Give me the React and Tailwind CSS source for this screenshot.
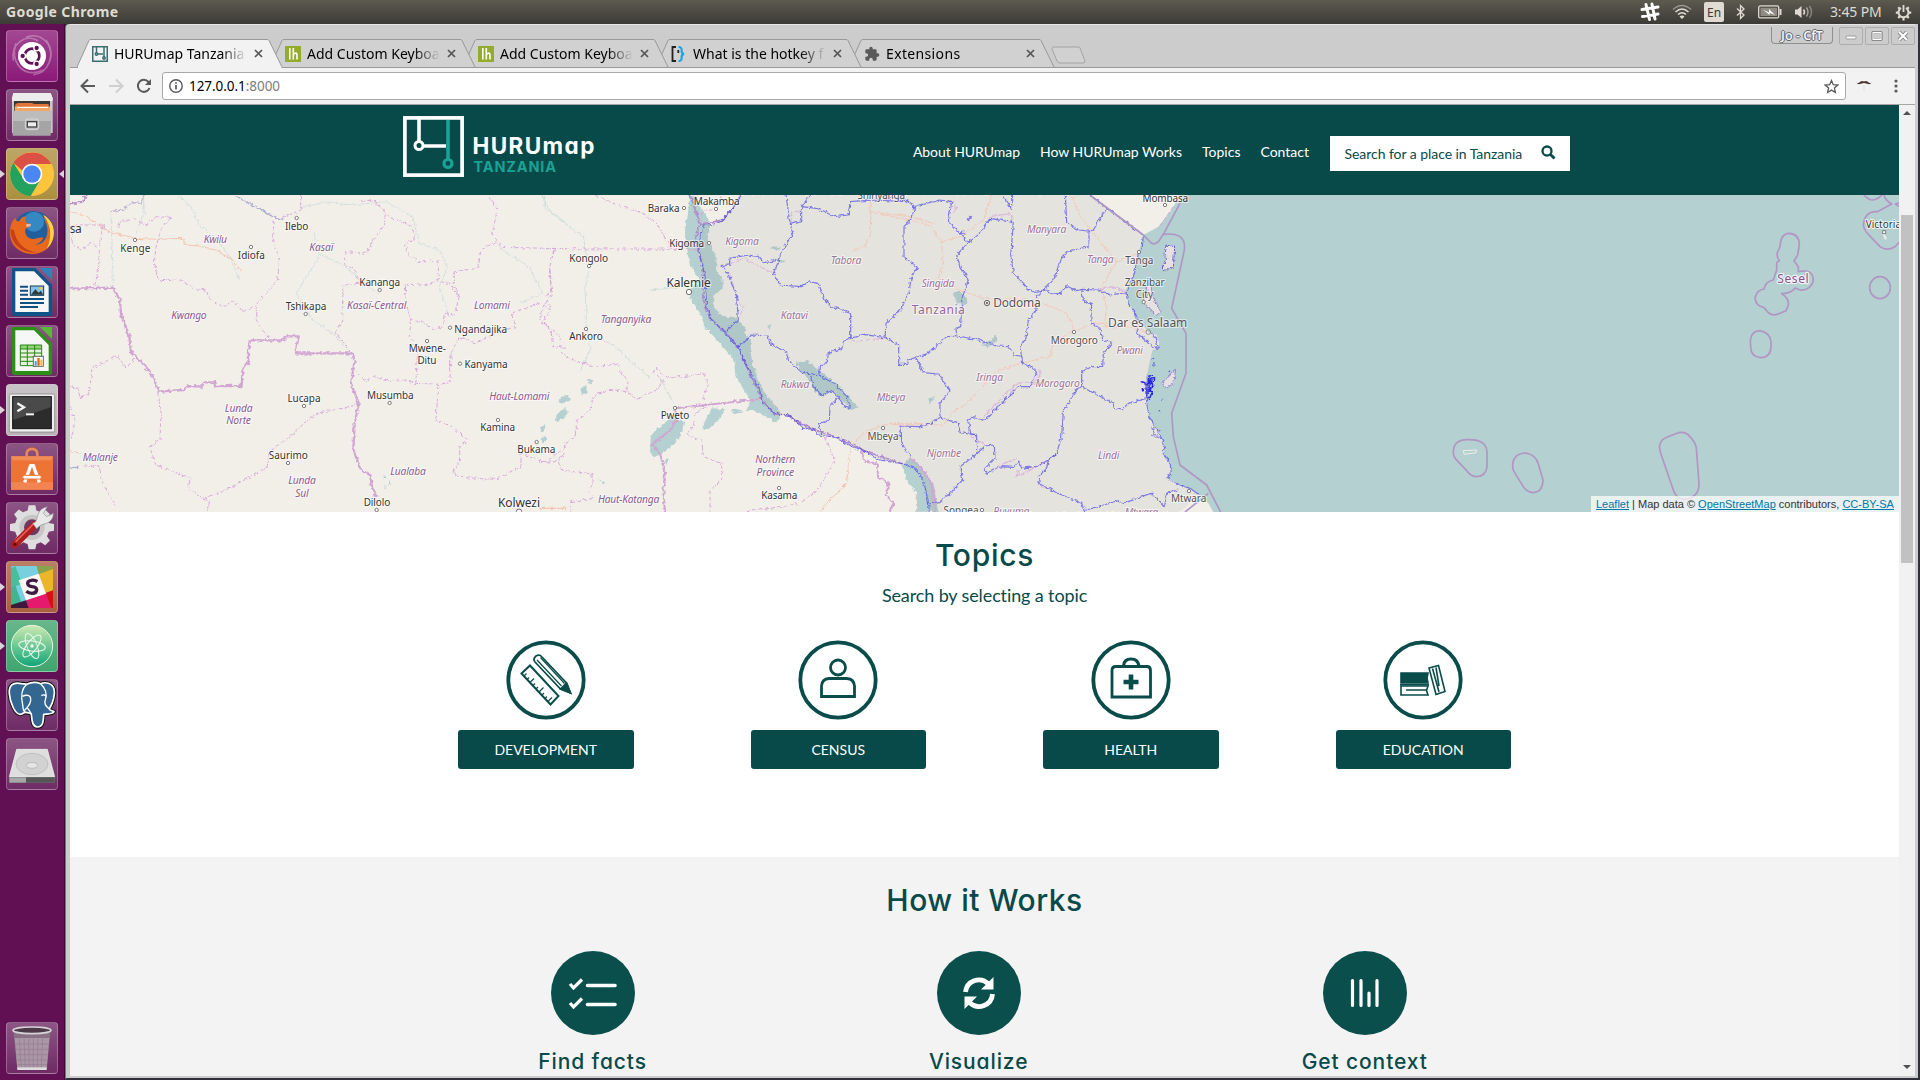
import React from "react";

const TEAL = "#094c4a";

/* ---------- launcher artwork (each in a 156 x 156 box) ---------- */

const Ubuntu = () => (
  <g>
    <g fill="none" stroke="#fff" opacity="0.3" strokeWidth="5">
      <path d="M22 92C14 40 60 10 96 32" />
      <path d="M120 30C150 70 130 130 82 134" />
      <path d="M30 40C10 90 50 150 110 120" />
      <path d="M60 22C100 4 146 40 132 92" />
    </g>
    <circle cx="78" cy="78" r="42" fill="#fff" />
    <circle cx="78" cy="78" r="22" fill="none" stroke="#5f1355" strokeWidth="8" />
    {[[50, 78], [92, 54], [92, 102]].map(([x, y]) => (
      <circle key={x + "-" + y} cx={x} cy={y} r="8.5" fill="#5f1355" stroke="#fff" strokeWidth="4" />
    ))}
  </g>
);

const Files = () => (
  <g>
    <path d="M18 28L22 12H134L140 28V132H18Z" fill="#c9c9c9" />
    <path d="M18 28L22 12H134L140 28V36H18Z" fill="#ececec" />
    <rect x="24" y="36" width="108" height="34" fill="#3b3936" />
    <path d="M28 46L36 42H78L84 45H128V66H28Z" fill="#e0743a" />
    <rect x="26" y="52" width="106" height="16" fill="#f0a765" />
    <rect x="34" y="54" width="92" height="3" fill="#fff" />
    <path d="M22 66H136L134 140H20Z" fill="#a5a5a5" />
    <path d="M22 66H136L135 96H21Z" fill="#bcbcbc" />
    <rect x="58" y="90" width="40" height="32" rx="8" fill="#bdbdbd" stroke="#d8d8d8" strokeWidth="3" />
    <rect x="64" y="98" width="28" height="16" fill="#eee" stroke="#444" strokeWidth="4" />
  </g>
);

const Chrome = () => (
  <g>
    <circle cx="78" cy="78" r="66" fill="#fdc43c" />
    <path d="M22 44A66 66 0 0 1 136 48H78A30 30 0 0 0 50 68Z" fill="#db5146" />
    <path d="M22 44A66 66 0 0 0 74 144L104 94A30 30 0 0 1 52 92Z" fill="#22a15f" />
    <circle cx="78" cy="78" r="31" fill="#fff" />
    <circle cx="78" cy="78" r="26" fill="#4a87f2" />
  </g>
);

const Firefox = () => (
  <g>
    <circle cx="82" cy="72" r="60" fill="#1f5f9e" />
    <circle cx="84" cy="44" r="30" fill="#3f9bd2" opacity="0.7" />
    <path d="M112 24C150 44 154 96 122 126C90 152 40 142 20 110C4 82 12 46 28 32C30 42 34 44 40 42C44 34 52 28 60 28C56 38 58 44 64 48L72 52C74 58 66 62 60 64C54 72 58 92 78 96C94 96 98 90 112 92C108 104 96 112 84 112C110 116 128 92 124 62C122 50 116 40 112 24Z" fill="#e8681d" />
    <path d="M112 24C150 44 154 96 122 126C136 98 140 60 112 24Z" fill="#ffd34a" />
    <path d="M14 66C12 110 50 142 94 136C60 134 30 110 24 70Z" fill="#c63f17" />
    <path d="M60 52L74 50L74 58L62 60Z" fill="#f3b7a0" />
  </g>
);

const Sheet = ({ edge, corner, children }) => (
  <g>
    <path d="M22 6H88L138 56V142Q138 150 130 150H26Q18 150 18 142V10Q18 6 22 6Z" fill={edge} />
    <path d="M28 16H84L128 60V138H28Z" fill="#f7f7f7" />
    <path d="M102 6H138V42Z" fill={corner} />
    {children}
  </g>
);

const Writer = () => (
  <Sheet edge="#0e5488" corner="#2e83bd">
    <g stroke="#12507f" strokeWidth="6">
      <path d="M42 62H66M42 74H66M42 86H66M42 99H114M42 111H114M42 123H96" />
    </g>
    <rect x="73" y="60" width="40" height="28" fill="#83c3ea" stroke="#163c5c" strokeWidth="3" />
    <path d="M75 86L88 70L98 80L104 74L112 86Z" fill="#2c3d38" />
    <circle cx="105" cy="67" r="4" fill="#fbcb3d" />
  </Sheet>
);

const Calc = () => (
  <Sheet edge="#2a9115" corner="#55bb35">
    <rect x="43" y="60" width="64" height="62" fill="#e4f4dd" />
    <rect x="43" y="60" width="64" height="12" fill="#8fd673" />
    <path d="M43 60H107V122H43ZM43 72H107M43 84H107M43 96H107M43 109H107M64 60V122M86 60V122" stroke="#2a8317" strokeWidth="3" fill="none" />
    <rect x="82" y="94" width="30" height="30" fill="#fff" stroke="#666" strokeWidth="3" />
    <rect x="86" y="108" width="6" height="14" fill="#3ea0dc" />
    <rect x="94" y="99" width="7" height="23" fill="#e8641c" />
    <rect x="103" y="104" width="6" height="18" fill="#f3ba2f" />
  </Sheet>
);

const Terminal = () => (
  <g>
    <rect x="10" y="30" width="136" height="114" rx="4" fill="#efefef" stroke="#777" strokeWidth="2" />
    <rect x="20" y="38" width="116" height="96" fill="#2c2c2c" stroke="#111" strokeWidth="3" />
    <path d="M22 40H134V70L22 108Z" fill="#4a4a4a" />
    <path d="M34 58L54 70L34 82" fill="none" stroke="#f3f3f3" strokeWidth="7" />
    <path d="M60 91H84" stroke="#f3f3f3" strokeWidth="6" />
  </g>
);

const Software = () => (
  <g>
    <path d="M62 50V32Q62 17 78 17Q94 17 94 32V50" fill="none" stroke="#c05e39" strokeWidth="9" />
    <path d="M15 40H141V140H15Z" fill="#ed7434" />
    <path d="M15 40H141L136 52H20Z" fill="#f28d56" />
    <path d="M62 52V34Q62 18 78 18Q94 18 94 34V52" fill="none" stroke="#e58a62" strokeWidth="7" />
    <path d="M15 118H141V140H15Z" fill="#f28452" />
    <path d="M56 118L74 68H82L100 118" fill="none" stroke="#fff" strokeWidth="10" />
    <rect x="50" y="97" width="56" height="11" rx="5" fill="#fff" stroke="#ed7434" strokeWidth="3" />
  </g>
);

const Settings = () => (
  <g>
    <g fill="#dedede">
      <circle cx="78" cy="76" r="52" />
      {[0, 45, 90, 135, 180, 225, 270, 315].map((a) => (
        <path key={a} d="M64 30L68 10H88L92 30Z" transform={`rotate(${a} 78 76)`} />
      ))}
    </g>
    <circle cx="78" cy="76" r="38" fill="#c6c6c6" />
    <circle cx="78" cy="76" r="24" fill="#6d3a64" />
    <path d="M26 128L86 68" stroke="#b01f1f" strokeWidth="22" strokeLinecap="round" />
    <path d="M30 118L84 64" stroke="#e4615c" strokeWidth="5" strokeLinecap="round" />
    <path d="M80 64C94 60 90 52 96 38Q102 18 124 14L112 34L122 44L142 34Q142 56 122 64Q104 66 92 80Z" fill="#e9e9e9" stroke="#8f8f8f" strokeWidth="2" />
    <circle cx="27" cy="127" r="5" fill="#5f0f12" />
  </g>
);

const SlackTile = () => (
  <g>
    <rect x="15" y="15" width="126" height="126" rx="6" fill="#78d0df" />
    <path d="M15 36L52 141H15Z" fill="#3fb595" />
    <path d="M15 22L28 15L48 68L15 80Z" fill="#45bf9c" />
    <path d="M92 15H141V30L98 40Z" fill="#8aa24c" />
    <path d="M98 40L141 24V88L116 96Z" fill="#ebb62a" />
    <path d="M118 96L141 88V141H134Z" fill="#d90f16" />
    <path d="M60 118L120 96L134 141H66Z" fill="#e5196e" />
    <path d="M15 132L60 118L68 141H15Z" fill="#3b1a3e" />
    <path d="M38 58L98 38L120 98L60 118Z" fill="#fbf7f3" />
    <path d="M94 62Q86 56 76 58Q64 60 65 68Q66 76 78 77Q92 78 92 87Q91 97 78 97Q68 97 61 91" fill="none" stroke="#3e1c43" strokeWidth="10" />
  </g>
);

const Atom = () => (
  <g>
    <circle cx="78" cy="78" r="62" fill="url(#atomFill)" stroke="#e6f5e0" strokeWidth="3" />
    <g fill="none" stroke="#eafaf0" strokeWidth="3">
      <ellipse cx="78" cy="78" rx="40" ry="15" transform="rotate(8 78 78)" />
      <ellipse cx="78" cy="78" rx="40" ry="15" transform="rotate(68 78 78)" />
      <ellipse cx="78" cy="78" rx="40" ry="15" transform="rotate(128 78 78)" />
    </g>
    <circle cx="78" cy="78" r="5" fill="#fff" />
  </g>
);

const ELEPHANT = "M46 14C20 8 8 20 10 44C12 72 28 106 42 106C50 106 52 100 58 100C68 104 74 98 76 106C78 124 78 142 94 144C112 144 112 126 113 106C122 104 138 108 144 98C140 94 132 96 130 90C142 70 148 44 144 30C138 12 118 8 104 14C90 8 74 10 62 16C56 14 52 14 46 14Z";

const Postgres = () => (
  <g strokeLinejoin="round">
    <path d={ELEPHANT} fill="#336791" stroke="#111" strokeWidth="11" />
    <path d={ELEPHANT} fill="#336791" stroke="#fff" strokeWidth="5" />
    <path d="M62 16C46 30 44 52 50 78C52 88 50 96 58 100M104 14C118 28 124 46 118 62C112 76 122 84 130 90M50 52C60 46 74 48 74 60C76 76 60 88 56 94M106 50C112 46 118 48 120 52M76 106C70 92 64 88 62 84" fill="none" stroke="#fff" strokeWidth="4" />
  </g>
);

const Drive = () => (
  <g>
    <path d="M32 34H124L146 118V134H10V118Z" fill="#8b8b8b" />
    <path d="M32 34H124L146 116H10Z" fill="#dedede" stroke="#f4f4f4" strokeWidth="2" />
    <ellipse cx="78" cy="78" rx="48" ry="32" fill="#d2d2d2" stroke="#b5b5b5" strokeWidth="2" />
    <ellipse cx="78" cy="82" rx="17" ry="9" fill="#e5e5e5" stroke="#aaa" strokeWidth="2" />
    <path d="M10 118H146V134H10Z" fill="#565656" />
    <path d="M10 118H60V134H10Z" fill="#a7a7a7" />
  </g>
);

const Trash = () => (
  <g>
    <path d="M22 24H134L122 142H34Z" fill="#8a7286" />
    <path d="M26 48H130L122 142H34Z" fill="#b3a3b0" opacity="0.75" />
    <g stroke="#6c4a67" strokeWidth="2" opacity="0.35">
      <path d="M40 50L46 140M54 50L58 140M68 50L70 140M82 50V140M96 50L94 140M110 50L106 140M28 66H128M29 82H127M31 98H125M33 114H123M34 128H122" />
    </g>
    <ellipse cx="78" cy="25" rx="57" ry="10" fill="#4c3a49" stroke="#d8d3d7" strokeWidth="5" />
    <path d="M34 136H122V144H34Z" fill="#ddd" />
  </g>
);

const launcher = [
  { id: "ubuntu", Art: Ubuntu, bg: "bg-[#8b1a78]" },
  { id: "files", Art: Files, bg: "bg-[#6f2b65]" },
  { id: "chrome", Art: Chrome, bg: "bg-[#ac9040]", run: true, focus: true },
  { id: "firefox", Art: Firefox, bg: "bg-[#6f2b65]" },
  { id: "writer", Art: Writer, bg: "bg-[#6f2b65]" },
  { id: "calc", Art: Calc, bg: "bg-[#6f2b65]" },
  { id: "terminal", Art: Terminal, bg: "bg-[#b9b4b8]", run: true },
  { id: "software", Art: Software, bg: "bg-[#6f2b65]" },
  { id: "settings", Art: Settings, bg: "bg-[#6f2b65]" },
  { id: "slack", Art: SlackTile, bg: "bg-[#a95f40]", run: true },
  { id: "atom", Art: Atom, bg: "bg-[#41a56e]", run: true },
  { id: "postgres", Art: Postgres, bg: "bg-[#6f2b65]" },
  { id: "drive", Art: Drive, bg: "bg-[#6f2b65]" },
];

function Tile({ Art, bg, run, focus }) {
  return (
    <div className="relative flex justify-center w-[64px]">
      {run && <span className="absolute left-0 top-[22px] border-y-[4px] border-y-transparent border-l-[5px] border-l-[#d9d4d8]" />}
      <div className={`w-[52px] h-[52px] rounded-[4px] border border-white/25 bg-linear-to-b from-white/20 to-transparent ${bg}`}>
        <svg viewBox="0 0 156 156" className="block w-[52px] h-[52px] -m-px">
          <defs>
            <linearGradient id="atomFill" x1="0" y1="0" x2="0" y2="1">
              <stop offset="0" stopColor="#cdeab0" />
              <stop offset="1" stopColor="#0fa678" />
            </linearGradient>
          </defs>
          <Art />
        </svg>
      </div>
      {focus && <span className="absolute right-0 top-[22px] border-y-[4px] border-y-transparent border-r-[5px] border-r-[#d9d4d8]" />}
    </div>
  );
}

/* ---------- desktop bar ---------- */

function TopBar() {
  return (
    <div className="h-6 shrink-0 flex items-center justify-between bg-linear-to-b from-[#5d5a4f] to-[#3c3b37] text-[#dfdbd2] font-['Noto_Sans',sans-serif]">
      <div className="pl-[6px] text-[14px] leading-[24px] font-bold tracking-[0.38px]">Google Chrome</div>
      <div className="flex items-center pr-[8px] text-[14px] leading-[24px]">
        <svg width="20" height="20" viewBox="0 0 20 20" fill="none" stroke="#fff" strokeWidth="3" strokeLinecap="round">
          <path d="M6 2.500L9.500 17.500M12 2L15 17M2 7.500L18 5M2.500 14.500L18 12" />
        </svg>
        <svg width="20" height="16" viewBox="0 0 20 16" className="ml-[12px]" fill="none" stroke="#dfdbd2" strokeWidth="1.6">
          <path d="M1 5.5Q10 -2.5 19 5.5" opacity="0.5" />
          <path d="M3.5 8Q10 2 16.5 8" />
          <path d="M6 10.5Q10 7 14 10.5" />
          <path d="M7.5 12.5Q10 10.5 12.5 12.5L10 15Z" fill="#dfdbd2" stroke="none" />
        </svg>
        <span className="ml-[12px] w-[20px] h-[20px] rounded-[2px] bg-[#dfdbd2] text-[#3c3b37] text-[12px] leading-[21px] text-center">En</span>
        <svg width="9" height="16" viewBox="0 0 9 16" className="ml-[12px]" fill="none" stroke="#dfdbd2" strokeWidth="1.3">
          <path d="M1 4.5L8 11L4.5 14.5V1.5L8 5L1 11.5" />
        </svg>
        <svg width="24" height="14" viewBox="0 0 24 14" className="ml-[13px]">
          <rect x="0.7" y="0.9" width="20" height="12" rx="1.5" fill="none" stroke="#dfdbd2" strokeWidth="1.3" />
          <rect x="21.5" y="4" width="2" height="6" fill="#dfdbd2" />
          <rect x="2.5" y="2.8" width="16.5" height="8.2" fill="#8f8b82" />
          <path d="M5 4.5L11 7.5L11 4L17 10L11.5 7.8V10Z" fill="#fff" />
        </svg>
        <svg width="20" height="16" viewBox="0 0 20 16" className="ml-[12px]" fill="none" stroke="#dfdbd2" strokeWidth="1.5">
          <path d="M1 5.5H3.5L7.5 2V14L3.5 10.5H1Z" fill="#dfdbd2" stroke="none" />
          <path d="M9.5 5.5Q11.5 8 9.5 10.5" />
          <path d="M12.5 3.5Q15.5 8 12.5 12.5" opacity="0.6" />
          <path d="M15.5 2Q19.5 8 15.5 14" opacity="0.4" />
        </svg>
        <span className="ml-[16px] w-[53px] text-[14px] tracking-[-0.15px] whitespace-nowrap">3:45 PM</span>
        <svg width="17" height="17" viewBox="0 0 17 17" className="ml-[12px]" fill="none" stroke="#dfdbd2">
          <path d="M6 4A5 5 0 1 0 11 4" strokeWidth="2" />
          <path d="M8.5 1V8" strokeWidth="1.8" />
          <path d="M3.2 3.2L4.8 4.8M13.8 3.2L12.2 4.8M0.8 8.7H3M14 8.7H16.2M3.2 14L4.8 12.4M13.8 14L12.2 12.4M8.5 14V16.4" strokeWidth="2.2" />
        </svg>
      </div>
    </div>
  );
}

/* ---------- browser chrome ---------- */

const HuruFav = () => (
  <svg width="16" height="16" viewBox="0 0 16 16" fill="none" stroke="#3b6f6e" strokeWidth="1.5">
    <rect x="0.75" y="0.75" width="14.5" height="14.5" />
    <path d="M4.5 1V7M5 8H11M12 1V11" />
    <circle cx="4.5" cy="8" r="1.2" />
    <circle cx="12" cy="12" r="1.2" />
  </svg>
);
const LhFav = () => (
  <svg width="16" height="16" viewBox="0 0 16 16">
    <rect width="16" height="16" fill="#93ac2c" />
    <path d="M4.8 2V13.5M8.3 2V13.5M8.3 8.5Q12 5.5 12 9V13.5" fill="none" stroke="#fff" strokeWidth="1.6" />
  </svg>
);
const CodeFav = () => (
  <svg width="16" height="16" viewBox="0 0 16 16" fill="none" strokeWidth="1.8">
    <path d="M5 1H1.5V15H5" stroke="#222" />
    <path d="M7.3 4V7" stroke="#222" />
    <path d="M7.5 1Q11 1 10.6 4.5Q10.4 7.5 13 8Q10.4 8.5 10.6 11.5Q11 15 7.5 15" stroke="#18a3e8" strokeWidth="2.1" />
  </svg>
);
const PuzzleFav = () => (
  <svg width="16" height="16" viewBox="0 0 24 24" fill="#5a5a5a">
    <path d="M20.5 11H19V7a2 2 0 0 0-2-2h-4V3.5a2.5 2.5 0 0 0-5 0V5H4a2 2 0 0 0-2 2v3.8h1.5a2.7 2.7 0 0 1 0 5.4H2V20a2 2 0 0 0 2 2h3.8v-1.5a2.7 2.7 0 0 1 5.4 0V22H17a2 2 0 0 0 2-2v-4h1.500a2.500 2.500 0 0 0 0-5z" />
  </svg>
);

const tabs = [
  { label: "HURUmap Tanzania", Fav: HuruFav, z: "z-50", active: true },
  { label: "Add Custom Keyboa", Fav: LhFav, z: "z-40" },
  { label: "Add Custom Keyboa", Fav: LhFav, z: "z-30" },
  { label: "What is the hotkey f", Fav: CodeFav, z: "z-20" },
  { label: "Extensions", Fav: PuzzleFav, z: "z-10", wide: true },
];

function Tab({ label, Fav, z, active, wide }) {
  return (
    <div className={`relative w-[193px] h-[28px] shrink-0 ${z}`}>
      <svg width="206" height="29" viewBox="0 0 206 29" className="absolute left-0 top-0">
        <path
          d="M0 28L12 1.5Q12.500 0.500 14 0.500H190Q191.500 0.500 192 1.500L205 28"
          fill={active ? "#f2f2f2" : "#d1d1d1"} stroke="#999" strokeWidth="1"
        />
        {active && <path d="M1 28.500H204.500" stroke="#f2f2f2" strokeWidth="2" />}
      </svg>
      <div className="relative flex items-center h-[29px] pl-[15px]">
        <Fav />
        <span className={`ml-[6px] w-[134px] overflow-hidden whitespace-nowrap text-[14px] leading-[20px] text-black [mask-image:linear-gradient(to_right,#000_80%,transparent_99%)] ${wide ? "tracking-[0.35px]" : "tracking-normal"}`}>{label}</span>
        <svg width="9" height="9" viewBox="0 0 9 9" className="ml-[6.500px] ml-[6px] shrink-0" stroke="#555" strokeWidth="1.7">
          <path d="M1 1L8 8M8 1L1 8" />
        </svg>
      </div>
    </div>
  );
}

function WindowButton({ children }) {
  return (
    <span className="flex items-center justify-center w-[24px] h-[18px] rounded-[2px] border border-[#adadad]">
      <svg width="12" height="10" viewBox="0 0 12 10" fill="none">{children}</svg>
    </span>
  );
}

function BrowserChrome() {
  return (
    <div className="shrink-0 font-['Noto_Sans',sans-serif]">
      <div className="flex items-end justify-between h-[43px] border-t border-[#e6e6e6]">
        <div className="flex items-end pl-[7px]">
          {tabs.map((t, i) => <Tab key={i} {...t} />)}
          <svg width="36" height="18" viewBox="0 0 36 18" className="ml-[9px] mb-[3px]">
            <path d="M2 1H27Q28.500 1 29 2L34 15Q34 17 32 17H9Q7 17 6 15L1 3Q1 1 2 1Z" fill="#d1d1d1" stroke="#a3a3a3" />
          </svg>
        </div>
        <div className="flex self-start pt-[2px] gap-[2px]">
          <span className="mr-[4px] w-[62px] h-[17px] rounded-b-[4px] border border-t-0 border-[#8f8f8f] text-[12.5px] leading-[17px] text-center font-semibold text-[#f4f4f4] [text-shadow:1px_0_0_#666,-1px_0_0_#666,0_1px_0_#666,0_-1px_0_#666] whitespace-nowrap">Jo - CfT</span>
          <WindowButton><rect x="1" y="5" width="10" height="3" rx="1" fill="#fff" stroke="#999" /></WindowButton>
          <WindowButton><rect x="1.500" y="1" width="9" height="8" rx="1" stroke="#8c8c8c" strokeWidth="2.500" /><rect x="2" y="1.500" width="8" height="7" stroke="#fff" /></WindowButton>
          <WindowButton><path d="M2 1L10 9M10 1L2 9" stroke="#8c8c8c" strokeWidth="4" /><path d="M2 1L10 9M10 1L2 9" stroke="#fff" strokeWidth="2" /></WindowButton>
        </div>
      </div>
      <div className="flex items-center h-[38px] bg-[#f2f2f2] border-t border-t-[#999] border-b border-b-[#a6a6a6]">
        <svg width="16" height="16" viewBox="0 0 16 16" className="ml-[10px]" fill="none" stroke="#5a5a5a" strokeWidth="2">
          <path d="M15 8H2M8 1.500L1.500 8L8 14.500" />
        </svg>
        <svg width="16" height="16" viewBox="0 0 16 16" className="ml-[12px]" fill="none" stroke="#cfcfcf" strokeWidth="2">
          <path d="M1 8H14M8 1.500L14.500 8L8 14.500" />
        </svg>
        <svg width="16" height="16" viewBox="0 0 16 16" className="ml-[12px]" fill="none" stroke="#5a5a5a" strokeWidth="2">
          <path d="M13.500 10A6 6 0 1 1 12.500 4L14 5.500" />
          <path d="M15 1V7H9Z" fill="#5a5a5a" stroke="none" />
        </svg>
        <div className="ml-[10px] w-[1684px] h-[28px] flex items-center rounded-[3px] border border-[#a8a8a8] bg-white">
          <svg width="14" height="14" viewBox="0 0 14 14" className="ml-[6px]" fill="none" stroke="#5a5a5a" strokeWidth="1.400">
            <circle cx="7" cy="7" r="6.200" />
            <path d="M7 6V10.500M7 3.200V4.700" strokeWidth="1.700" />
          </svg>
          <span className="ml-[6px] text-[13.5px] leading-[20px] tracking-[-0.05px] text-black">127.0.0.1<span className="text-[#7d7d7d]">:8000</span></span>
          <svg width="15" height="15" viewBox="0 0 15 15" className="ml-auto mr-[6px]" fill="none" stroke="#5a5a5a" strokeWidth="1.300">
            <path d="M7.500 1.500L9.300 5.700L13.800 6.100L10.400 9L11.400 13.500L7.500 11.100L3.600 13.500L4.600 9L1.200 6.100L5.700 5.700Z" />
          </svg>
        </div>
        <svg width="16" height="12" viewBox="0 0 16 12" className="ml-[10px]">
          <path d="M0.500 2.500Q2 4 4.500 1.500Q6.500 0.500 8 1.500Q9.500 0.500 11.500 1.500Q14 4 15.500 2.500Q14.500 5 11 3.800Q8.500 3 8 3Q7.500 3 5 3.800Q1.500 5 0.500 2.500Z" fill="#4a3732" />
          <path d="M8 5V11" stroke="#ddd" />
        </svg>
        <svg width="4" height="14" viewBox="0 0 4 14" className="ml-[22px]" fill="#5a5a5a">
          <circle cx="2" cy="2" r="1.600" /><circle cx="2" cy="7" r="1.600" /><circle cx="2" cy="12" r="1.600" />
        </svg>
      </div>
    </div>
  );
}

/* ---------- site header ---------- */

function SiteHeader() {
  return (
    <header className="h-[90px] bg-[#084a49] shrink-0">
      <div className="mx-auto w-[1170px] h-full flex justify-between">
        <div className="flex items-start ml-[3px] pt-[11px]">
          <svg width="61" height="61" viewBox="0 0 61 61" fill="none">
            <rect x="1.900" y="1.900" width="57.200" height="57.200" stroke="#fff" strokeWidth="3.700" />
            <path d="M16 3V25M21 30H43" stroke="#fff" strokeWidth="3.600" />
            <circle cx="16" cy="29.500" r="4" stroke="#fff" strokeWidth="3" />
            <path d="M45 4V43" stroke="#1aa294" strokeWidth="3.600" />
            <circle cx="45" cy="47.500" r="4" stroke="#1aa294" strokeWidth="3.200" />
          </svg>
          <div className="ml-[9px] mt-[17px] font-['Inter',sans-serif] font-bold [font-feature-settings:'cv11']">
            <div className="text-[22.5px] leading-[26px] text-white tracking-[1.4px]">HURUmap</div>
            <div className="ml-px text-[14.5px] leading-[16px] text-[#1aa294] tracking-[0.85px]">TANZANIA</div>
          </div>
        </div>
        <nav className="flex items-center font-['Lato',sans-serif] text-[14px] leading-[20px] text-white whitespace-nowrap mt-[4px]">
          <a className="mr-[20px] tracking-[-0.05px]">About HURUmap</a>
          <a className="mr-[20px]">How HURUmap Works</a>
          <a className="mr-[20px]">Topics</a>
          <a className="mr-[20.5px]">Contact</a>
          <div className="w-[240px] h-[35px] mt-[3px] pl-[15px] pr-[14px] flex items-center justify-between bg-white text-[#084a49]">
            <span className="pt-px tracking-[-0.05px]">Search for a place in Tanzania</span>
            <svg width="15" height="15" viewBox="0 0 15 15" fill="none" stroke={TEAL} className="-mt-[3px]">
              <circle cx="6" cy="6" r="4.500" strokeWidth="2.300" />
              <path d="M9.500 9.500L13.500 13.500" strokeWidth="2.800" />
            </svg>
          </div>
        </nav>
      </div>
    </header>
  );
}

/* ---------- map: three drawing units per pixel ---------- */

const TZ_COAST = "L775 190L762 255L738 300L745 340L770 380L790 405L805 425L830 435L838 460L830 478L818 480L808 520L798 570L800 640L808 680L835 725L852 760L850 790L870 820L874 852L858 862L900 885L930 895L958 915";

const waters = [
  "M448 15L470 15L480 50L505 90L510 110L503 150L520 180L530 210L528 240L548 270L548 295L520 320L520 350L550 380L590 385L618 415L618 440L632 450L632 490L640 530L665 590L685 625L715 655L720 685L705 697L680 680L650 665L620 660L632 630L605 590L585 550L583 510L540 460L495 410L480 370L452 330L450 300L480 270L460 240L440 190L435 120L445 60Z",
  "M768 520L800 510L835 540L890 580L930 625L957 652L935 660L905 630L880 600L845 620L825 605L808 570L785 545Z",
  "M400 680L435 700L420 740L385 780L345 800L330 790L332 740L370 700Z",
  "M515 655L555 658L540 685L505 718L485 715L500 685Z",
  "M570 662L585 656L610 662L590 672Z",
  "M60 620L85 618L90 632L68 640L56 634Z",
  "M50 672L75 655L88 662L70 685L48 695Z",
  "M122 598L138 586L140 605L126 618Z",
  "M146 568L158 572L156 584L144 578Z",
  "M0 712L14 706L18 716L4 726Z",
  "M4 744L18 742L18 758L6 754Z",
  "M374 812L384 808L384 824L376 822Z",
  "M174 866L184 868L182 874ZM186 872L194 878L188 884Z",
  "M1085 825L1110 800L1145 830L1180 880L1195 965L1128 965L1130 910L1100 870Z",
  "M1240 306L1262 306L1284 328L1274 348L1250 340Z",
  "M1325 466L1350 450L1370 434L1372 452L1345 472Z",
  "M1130 40L1158 40L1140 55Z",
  "M1165 625L1185 622L1170 645Z",
  "M700 168L718 172L715 180L690 175ZM700 205L740 214L722 218Z",
  "M682 410L694 404L690 416Z",
  "M-468 855L-462 860L-470 866ZM-450 870L-446 880L-456 888ZM-466 884L-462 894L-466 898Z",
];

const dashed6 = [
  "M704 15V60L640 85L615 75M625 90L620 140L640 210L635 270L570 345L575 400L608 445",
  "M315 82L270 80L240 105L205 88L160 95L155 115M315 82L285 120L270 170L265 220L277 272L345 270L380 295L420 300L430 325L470 352L505 332L530 365L568 348",
  "M112 105L102 150L97 240L85 292M20 105L18 160L45 180L75 160L98 175M20 105L112 105L130 130",
  "M885 35L920 30L958 65L955 105L925 145L900 190L840 185L838 225L868 240L880 280",
  "M920 30L970 80L1040 110L1045 150L1018 160L1025 190L1055 215L1115 215L1120 270L1075 285L1018 282L1020 340L1035 390L1065 395L1105 418L1130 410L1135 370L1165 375L1180 320L1150 280L1120 275",
  "M880 280L830 285L830 390L808 428L858 490M1035 390L1030 440L1055 470L1050 580L1010 570L960 572L925 560L900 572L868 545",
  "M1050 580L1118 583L1152 575L1155 490L1180 440L1230 460L1285 430L1350 410L1335 370L1420 340L1455 360L1430 395L1455 420L1460 470L1500 475",
  "M1118 583L1110 690L1160 710L1205 750L1182 768L1180 815L1160 850L1180 862L1290 868L1365 830L1365 790L1440 818L1500 770",
  "M1270 20L1295 60L1278 130L1305 172L1500 176M1290 155L1245 180L1235 235L1165 245L1165 285L1180 320",
  "M1465 180L1450 230L1455 300L1440 320L1455 360",
  "M868 645L830 655L750 670L715 700L665 745L610 785L600 835L535 870L470 905L410 925L365 890L375 865L270 825L250 770L282 750L285 660L275 605",
  "M410 925L430 935L425 965",
  "M12 590L38 595L42 625L70 610L78 535L120 515L150 495L180 535L210 500",
  "M12 650L28 690L15 750M50 828L100 830L110 880L150 950",
];
const dashed7 = [
  "M165 15L230 45L310 70L350 100L385 160L395 178M0 176L480 178",
  "M42 180L30 230L35 310L5 360L0 390L60 440L65 490L110 515L170 530L235 520L245 555L265 570L260 605L205 598L160 620L150 660L112 690L105 740L75 760L70 800L45 815L0 818",
  "M260 605L290 628L350 600L370 575L340 548L350 535L375 560L430 560L490 550L505 585L490 620L500 650L465 670L460 710L440 735L485 752L490 800L545 820L545 870L510 900L510 965",
  "M55 815L65 840L155 852L160 880L145 905L165 925L92 935L92 965",
  "M855 740L885 810L850 870L835 900L780 940L690 955L620 965",
  "M480 100L490 60L530 60L545 15",
];

const blue8 = [
  "M630 15L680 55L790 135M680 55L640 120L627 123L595 120L560 98L556 15",
  "M627 123V170L565 183L540 210L530 245L515 275L490 300L455 306L400 248L392 195L400 98L330 85L300 130L265 158L230 195L240 230L265 268L245 330L242 410L228 415L230 438L200 440L145 490L108 502L85 510L82 523L56 523L56 465L15 443L18 400L65 355L88 300L93 265L112 232L72 200L72 110L95 85L105 50",
  "M330 85L335 88M395 15V58L370 20M105 50L180 30L215 35L205 95L240 130L265 158",
  "M105 50L85 35L50 22L0 30",
  "M230 438L290 448L350 468L385 470L405 495L425 500L420 470L438 445L445 390L468 360L470 320L490 300L500 300L515 312L540 310L560 288L590 302L605 298L655 300L690 315L738 308",
  "M605 298L610 330L635 345L632 400L660 415L668 450L698 458L670 490L668 530L635 530L605 545L605 590L700 640L702 655L725 660L745 640L800 625",
  "M605 590L588 600L550 665L545 740L528 795L475 828L425 835L418 812L400 832L360 830L318 852L315 835L345 805L343 765L315 768L290 792L290 735L272 730L265 690L285 680L312 692L345 660L415 590L450 590L470 550L465 538L428 520L425 500",
  "M528 795L505 808L500 835L475 860L478 880L530 908L605 940L615 965",
  "M615 962L670 945L715 932L730 940L815 910L850 948L860 910L895 900",
  "M108 502L130 548L175 552L210 603L180 640L180 680L155 700L120 710L60 708L62 755L90 798",
  "M180 680L200 690L235 698L240 728L290 735M290 792L240 830L248 870L215 905L180 935L145 940",
  "M738 310L745 340L770 380L775 410L770 430L785 440L820 470L835 475L825 440L810 425",
  "M800 570L800 640L808 680L835 725L852 760L850 790L870 820L874 852L858 862L900 885L930 895L958 915",
  "M262 88L270 78L275 80L264 90ZM250 122L238 132L255 128",
  "M775 190L762 255L740 300M790 135L786 180",
];
const blue7 = [
  "M600 20L575 60L545 90L520 103L490 105L475 165L480 200L495 260L500 350L512 385L553 428L595 470L615 520L660 600L665 635L700 668L715 672L745 675L770 695L790 715L820 718L835 735L890 742L930 768L980 785L1010 808L1090 822L1125 835L1150 870L1165 935L1168 965",
  "M738 15L748 90L758 130L722 190L718 210L670 218L655 200L625 195L570 205L568 225L545 226L565 255L590 320L595 388L553 428M718 210L700 250L720 285L785 290L805 275L835 280L855 330L875 350L932 370V445L970 433L1035 443",
  "M810 15L785 50L785 92L750 100M785 50L830 55L885 80L925 75L930 35L1000 30L1100 35",
  "M932 445L912 450L905 475L865 488L862 515L838 530L836 555L785 547L745 510L740 488L690 460L684 438L635 435L595 470",
  "M836 555L890 585L920 620L932 655L915 652L895 620L875 602L845 615L820 590L812 560M895 620L870 650L868 690L835 700L845 735",
];

const kinds = {
  city: { fontSize: 30, fill: "#333" },
  big: { fontSize: 36, fill: "#333" },
  area: { fontSize: 31, fill: "#8c5a91", fontStyle: "italic" },
  tcity: { fontSize: 30, fill: "#505050" },
  tbig: { fontSize: 36, fill: "#555" },
  tarea: { fontSize: 31, fill: "#9c7399", fontStyle: "italic" },
  country: { fontSize: 36, fill: "#95659a" },
};

/* [text, centre x, baseline, width, kind] */
const labels6 = [
  ["sa", 29, 129, 36, "big"], ["Kenge", 208, 186, 90, "city"], ["Idiofa", 556, 208, 81, "city"], ["Ilebo", 692, 120, 70, "city"],
  ["Kananga", 941, 288, 122, "city"], ["Tshikapa", 720, 360, 122, "city"], ["Ngandajika", 1244, 430, 158, "city"],
  ["Mwene-", 1084, 485, 112, "city"], ["Ditu", 1083, 523, 57, "city"], ["Kanyama", 1260, 533, 129, "city"],
  ["Lucapa", 714, 635, 99, "city"], ["Musumba", 973, 627, 140, "city"], ["Kamina", 1295, 724, 105, "city"],
  ["Bukama", 1411, 789, 114, "city"], ["Saurimo", 667, 806, 117, "city"], ["Dilolo", 933, 948, 80, "city"], ["Kolwezi", 1359, 950, 126, "big"],
  ["Kwilu", 448, 158, 70, "area"], ["Kasaï", 766, 183, 72, "area"], ["Kwango", 369, 387, 106, "area"], ["Kasaï-Central", 932, 356, 178, "area"],
  ["Lomami", 1278, 356, 108, "area"], ["Lunda", 518, 665, 83, "area"], ["Norte", 518, 703, 74, "area"], ["Haut-Lomami", 1360, 629, 181, "area"],
  ["Malanje", 103, 813, 106, "area"], ["Lualaba", 1026, 855, 107, "area"], ["Lunda", 708, 882, 83, "area"], ["Sul", 708, 920, 40, "area"],
];
const labels7 = [
  ["Baraka", 371, 65, 96, "city"], ["Makamba", 530, 46, 137, "city"], ["Kigoma", 440, 171, 105, "city"], ["Kongolo", 146, 217, 116, "city"],
  ["Kalemie", 446, 291, 133, "big"], ["Ankoro", 138, 451, 101, "city"], ["Pweto", 405, 687, 86, "city"], ["Kasama", 718, 927, 108, "city"],
  ["Mbeya", 1029, 749, 93, "tcity"], ["Tanganyika", 258, 400, 152, "area"], ["Northern", 706, 819, 120, "area"], ["Province", 706, 857, 113, "area"],
  ["Haut-Katanga", 266, 939, 184, "area"], ["Kigoma", 606, 164, 101, "tarea"], ["Tabora", 918, 223, 92, "tarea"], ["Katavi", 763, 388, 81, "tarea"],
  ["Rukwa", 765, 594, 86, "tarea"], ["Mbeya", 1053, 633, 86, "tarea"],
];
const labels8 = [
  ["Shinyanga", 4, 27, 143, "tcity"], ["Mombasa", 856, 35, 137, "city"], ["Tanga", 778, 222, 84, "tcity"], ["Zanzibar", 794, 287, 120, "tcity"], ["City", 793, 325, 52, "tcity"],
  ["Dodoma", 411, 351, 142, "tbig"], ["Dar es Salaam", 803, 411, 238, "tbig"], ["Morogoro", 583, 461, 141, "tcity"], ["Mtwara", 926, 937, 106, "tcity"], ["Songea", 243, 971, 105, "tcity"],
  ["Manyara", 500, 128, 118, "tarea"], ["Tanga", 661, 218, 80, "tarea"], ["Singida", 174, 291, 98, "tarea"], ["Tanzania", 175, 371, 159, "country"],
  ["Pwani", 749, 492, 79, "tarea"], ["Iringa", 329, 572, 80, "tarea"], ["Morogoro", 533, 590, 133, "tarea"], ["Lindi", 686, 806, 64, "tarea"],
  ["Njombe", 192, 801, 103, "tarea"], ["Ruvuma", 394, 975, 108, "tarea"], ["Mtwara", 784, 979, 100, "tarea"],
];

const dots6 = [[207, 150], [555, 171], [692, 84], [941, 300], [719, 372], [1152, 413], [1083, 453], [1182, 521], [714, 648], [971, 639], [1296, 690], [1412, 756], [666, 819], [932, 960]];
const dots7 = [[432, 54], [528, 57], [507, 159], [147, 228], [138, 417], [405, 654], [717, 894], [1029, 714]];
const dots8 = [[855, 45], [777, 186], [791, 336], [582, 426], [927, 903], [306, 960]];

const Labels = ({ items }) => items.map(([t, x, y, w, k], i) => (
  <text
    key={i} x={x - w / 2} y={y} textLength={w} lengthAdjust="spacing" {...kinds[k]}
    stroke="#fff" strokeOpacity="0.6" strokeWidth="6" strokeLinejoin="round" paintOrder="stroke"
  >{t}</text>
));
const Dots = ({ items }) => items.map(([x, y]) => (
  <circle key={x + "," + y} cx={x} cy={y} r="5" fill="#fff" stroke="#666" strokeWidth="2.500" />
));
const Lines = ({ items }) => items.map((d, i) => <path key={i} d={d} />);

function MapView() {
  return (
    <div className="relative h-[317px] shrink-0 bg-[#f2efe9] overflow-hidden">
      <svg width="1829" height="317" viewBox="0 15 5487 951" className="block font-['Noto_Sans',sans-serif]" fill="none" strokeLinejoin="round">
        <defs>
          <filter id="rough" filterUnits="userSpaceOnUse" x="-100" y="0" width="5700" height="990" colorInterpolationFilters="sRGB">
            <feTurbulence type="fractalNoise" baseFrequency="0.09" numOctaves="2" seed="4" />
            <feDisplacementMap in="SourceGraphic" scale="14" xChannelSelector="R" yChannelSelector="G" />
          </filter>
        </defs>

        <g transform="translate(2430 0)">
          <path d={"M900 15L875 60L835 110L790 135" + TZ_COAST + "L985 940L1000 966H3100V15Z"} fill="#b5d0d0" />
        </g>

        <g filter="url(#rough)">
          <g transform="translate(1410 0)" fill="#b5d0d0"><Lines items={waters} /></g>
          <g transform="translate(2430 0)">
            <path
              d={"M-420 15L-445 60L-475 90L-500 103L-530 105L-545 165L-540 200L-525 260L-520 350L-508 385L-467 428L-425 470L-405 520L-360 600L-355 635L-320 668L-275 675L-250 695L-230 715L-200 718L-185 735L-130 742L-90 768L-40 785L-10 808L70 822L105 835L130 870L145 935L148 966H900L958 915"
                + "L930 895L900 885L858 862L874 852L870 820L850 790L852 760L835 725L808 680L800 640L798 570L808 520L818 480L830 478L838 460L830 435L805 425L790 405L770 380L745 340L738 300L762 255L775 190L790 135L630 15Z"}
              fill="#8c8c94" fillOpacity="0.12"
            />
            <g fill="#e6e0e2" stroke="#6d58cf" strokeWidth="3">
              <path d="M858 165L884 170L880 232L862 240L845 238L860 205L852 190Z" strokeDasharray="11 2" />
              <path d="M798 290L812 282L818 318L842 365L830 376L795 345L790 325L805 320Z" stroke="#a384c4" />
              <path d="M886 540L884 565L862 598L846 580Z" stroke="#8f7fd0" />
            </g>
            <path d="M798 560L822 556M802 568L824 566L818 578L800 574M796 585L820 582L822 592L804 598M800 600L818 602L808 628L800 615M782 575L800 580M785 600L800 596M812 556V600M806 560L803 622" stroke="#2422e0" strokeWidth="4" />
            <path d="M815 712L845 720L825 735ZM815 735L840 745" stroke="#7f7be0" strokeWidth="3" />
            <g fill="#4a48dd"><circle cx="820" cy="508" r="2.500" /><circle cx="822" cy="522" r="2.500" /><circle cx="868" cy="544" r="2.500" /><circle cx="846" cy="628" r="2" /><circle cx="838" cy="662" r="2" /></g>
          </g>

          <g transform="translate(-12 0)">
            <g stroke="#d3dfdc" strokeWidth="3">
              <path d="M340 15L380 60L400 105L450 145L490 200L520 270M230 15L235 70L210 130M135 60L142 290M745 130L760 200L690 310L740 390L800 430L855 490M760 190L830 225L935 310M1430 15L1450 60L1500 100M705 50L780 38L860 45L960 35L1040 80L1060 160L1120 180L1145 230L1120 290L1150 380M1300 175L1390 230L1430 310L1360 340" />
            </g>
            <g stroke="#f4c3ae" strokeWidth="3">
              <path d="M12 65L60 80L130 125L205 145L285 148L350 145L360 165L400 168L450 180L500 210L525 245M12 785L50 790M1420 955L1500 955" />
            </g>
            <path d="M505 15L570 50L620 80L650 88M12 833L40 832" stroke="#a8aecd" strokeWidth="4" />
            <path d="M130 65L170 60L200 38L225 40L235 15" stroke="#bfb4d2" strokeWidth="4" />
            <g stroke="#d7a9da" strokeWidth="3" strokeDasharray="13 6"><Lines items={dashed6} /></g>
            <g stroke="#d2a6d3" strokeWidth="7">
              <path d="M12 296L140 293L162 330L165 375L190 440L195 485L240 530L265 570L278 605L350 600L370 588L410 590L412 577L445 577L447 588H527L530 535L548 520L545 490L552 451H655L656 439H698L688 490H857L866 510L855 580L878 640L866 700L862 780L885 840L912 855L918 890L932 920" />
              <path d="M12 42L50 35L60 15" stroke="#b78cc4" strokeWidth="5" />
            </g>
          </g>

          <g transform="translate(1410 0)">
            <path d="M10 15L15 55L130 140L138 190L147 235L135 300L140 410L150 480L120 545M150 430L220 465L300 540L330 562M360 565L400 640M330 300L440 290" stroke="#cfdedb" strokeWidth="3" />
            <path d="M990 30L992 130L975 170L940 180M990 65L1110 80L1180 100M940 770L960 735L1029 705L1150 700M930 775L920 880L860 940L840 965M0 955H75L85 965M1130 965L1128 910" stroke="#f2c7b4" strokeWidth="3" />
            <g stroke="#d7a9da" strokeWidth="3" strokeDasharray="13 6"><Lines items={dashed7} /></g>
            <g stroke="#d2a6d3" strokeWidth="6">
              <path d="M405 655L665 627M405 655L410 690L390 720L335 765L360 790L375 850L370 900L375 965" />
              <path d="M965 785L975 815L1010 820L1015 860L1045 880L1040 915L1060 940L1050 965" />
              <path d="M450 15L480 100M600 15L575 60L545 90L480 103L465 150L490 230L490 330L510 385L560 430L600 480L620 530L665 627L700 672L745 675L770 695L820 718L890 742L980 785L1090 822" stroke="#b18ccb" strokeWidth="5" />
              <path d="M1110 800L1145 835L1175 880L1185 965" />
            </g>
            <g stroke="#dab8da" strokeWidth="3" strokeDasharray="20 4">
              <path d="M545 230L610 205L700 250M570 250L595 340L610 350L598 385M1040 443L935 455M785 65H755V90" />
            </g>
            <g stroke="#4f4ae6" strokeOpacity="0.7" strokeWidth="3.500"><Lines items={blue7} /></g>
          </g>

          <g transform="translate(2430 0)">
            <path d="M0 72L90 90L150 105L185 155L188 230L175 265L240 300L310 325L465 330L560 370L582 420L520 460L510 500L420 520L350 545L260 640L215 670L190 705L30 700M185 155L240 140L310 90L335 15M575 15L600 80L665 160L710 215L775 190M710 215L665 290L680 360L670 410L760 412L800 425M582 425L640 400L690 400" stroke="#f0c9b8" strokeWidth="3" />
            <g stroke="#dab8da" strokeWidth="4">
              <path d="M330 80L395 70V100M210 30L230 50L218 70M455 575L410 580L310 680M500 815L460 835L410 860L415 840M410 805L350 830M268 735L315 765M660 300L695 290L738 305M470 540L485 545L460 585M475 880L490 895" />
            </g>
            <g stroke="#4f4ae6" strokeOpacity="0.7" strokeWidth="3.500"><Lines items={blue8} /></g>
          </g>
        </g>

        <g transform="translate(2430 0)" stroke="#af97c4" strokeWidth="5">
          <path d="M630 15L790 135L815 160Q825 165 835 155L850 133Q920 125 913 180L875 355L918 430V550L875 670L880 740L900 825L980 885L1022 966" />
          <path d="M900 40L850 133M985 910L915 966" />
          <path d="M880 50L835 115" strokeWidth="3" strokeDasharray="13 6" stroke="#cba9d2" />
        </g>

        <g transform="translate(3990 0)" stroke="#b195c4" strokeWidth="5">
          <path d="M160 790Q158 748 205 749Q262 748 261 790V830Q258 860 228 860Q212 858 200 842L168 808Q160 800 160 790Z" />
          <path d="M338 825Q340 790 378 789Q408 795 415 822L429 870Q428 906 400 908Q380 906 370 890L345 850Q337 840 338 825Z" />
          <path d="M778 770Q782 748 800 742L835 728Q858 724 870 740Q888 760 889 775L897 880Q898 925 850 929Q828 925 820 900L782 790Z" />
          <path d="M1051 450Q1055 422 1080 422Q1112 430 1113 455V470Q1112 502 1082 503Q1052 500 1052 470Z" />
          <ellipse cx="1440" cy="293" rx="31" ry="33" />
          <path d="M1140 170Q1142 130 1168 130Q1198 132 1198 165L1193 195L1182 213L1195 230V245Q1240 235 1240 272Q1232 302 1200 300L1185 294Q1175 310 1145 311Q1168 325 1165 345L1158 362L1140 370Q1115 382 1100 362L1092 353Q1062 345 1066 320Q1072 300 1092 297Q1096 275 1120 270L1130 240V218L1138 212Q1125 195 1138 175Z" />
          <path d="M1392 15Q1405 30 1417 30Q1435 28 1445 15M1452 15Q1455 30 1475 42L1432 65Q1395 62 1390 105Q1392 120 1405 133L1440 170Q1460 185 1485 170L1500 155M1485 42L1500 38M1485 42L1500 50" />
          <path d="M190 782L230 780L228 788L193 793Z" stroke="#eef0ea" strokeWidth="3" />
          <path d="M1450 130L1458 148" stroke="#eef0ea" strokeWidth="6" />
        </g>

        <g transform="translate(-12 0)"><Dots items={dots6} /><Labels items={labels6} /><circle cx="1359" cy="965" r="8" fill="#fff" stroke="#555" strokeWidth="2.500" /></g>
        <g transform="translate(1410 0)"><Dots items={dots7} /><Labels items={labels7} /><circle cx="447" cy="306" r="8" fill="#fff" stroke="#555" strokeWidth="2.500" /></g>
        <g transform="translate(2430 0)">
          <Dots items={dots8} />
          <circle cx="805" cy="426" r="7" stroke="#888" strokeWidth="2.500" />
          <circle cx="321" cy="339" r="8" stroke="#555" strokeWidth="2.500" /><circle cx="321" cy="339" r="3" fill="#555" />
          <Labels items={labels8} />
        </g>
        <g transform="translate(3990 0)">
          <text x="1132" y="278" fontSize="36" fill="#8b4f92" textLength="94" stroke="#fff" strokeOpacity="0.8" strokeWidth="7" paintOrder="stroke">Sesel</text>
          <text x="1397" y="113" fontSize="30" fill="#333" textLength="106" stroke="#fff" strokeOpacity="0.8" strokeWidth="6" paintOrder="stroke">Victoria</text>
          <rect x="1448" y="122" width="9" height="9" fill="#fff" stroke="#666" strokeWidth="2.500" />
        </g>
      </svg>
      <div className="absolute right-0 bottom-0 h-[16px] w-[308px] pl-[5px] bg-white/70 font-['Liberation_Sans',sans-serif] text-[11px] leading-[16px] text-[#333] whitespace-nowrap">
        <a className="text-[#0078A8] underline">Leaflet</a> | Map data © <a className="text-[#0078A8] underline">OpenStreetMap</a> contributors, <a className="text-[#0078A8] underline">CC-BY-SA</a>
      </div>
    </div>
  );
}

/* ---------- topic and step icons ---------- */

const RulerPencil = () => (
  <g fill="none" stroke={TEAL} strokeWidth="1.700">
    <path d="M15.500 33.500L24 25.500L52.500 56L44.500 64.500Z" strokeWidth="2" />
    <path d="M18 36L20.500 33.500M21 39.500L23 37.500M24 42.500L28 38.500M27 45.500L29 43.500M30 49L32 47M33 52L37.500 47.500M36 55L38 53M39 58.500L41 56.500M42 61.500L46 57.500" strokeWidth="1.200" />
    <path d="M29 22Q26.500 19 30 16Q33.500 14 36 17L60.500 43L64.500 53L54.500 49Z" />
    <path d="M31 20L55.500 46M34.500 17.500L58.500 43.500" strokeWidth="1.200" />
    <path d="M54.500 49L60.500 43L64.500 53Z" fill={TEAL} />
  </g>
);
const Person = () => (
  <g fill="none" stroke={TEAL} strokeWidth="2.800">
    <circle cx="40" cy="27.500" r="7.500" />
    <path d="M23.500 56.500V46Q24 39 31 38.500H49Q56 39 56.500 46V56.500Z" />
  </g>
);
const Kit = () => (
  <g fill="none" stroke={TEAL} strokeWidth="2.800">
    <path d="M21 57V30.500Q21 26.500 25 26.500H56Q59.500 26.500 59.500 30.500V57Z" />
    <path d="M32.500 26Q33 19 40 19Q47 19 48 26" strokeWidth="3.200" />
    <path d="M40 34.500V49.500M32.500 42H47.500" strokeWidth="4.600" />
  </g>
);
const Books = () => (
  <g fill="none" stroke={TEAL} strokeWidth="1.600">
    <path d="M18 33H45L44 38L45 43H18Z" fill={TEAL} />
    <path d="M45 46H18V55H45L43.500 50.500Z" />
    <path d="M23 50H44M17 44.700H46" />
    <path d="M46 28L55.500 25.500L62 51.500L53 54.500Z M49.500 28.500L56 52M53 27.500L56 46" />
  </g>
);

const topics = [
  { name: "DEVELOPMENT", Icon: RulerPencil },
  { name: "CENSUS", Icon: Person },
  { name: "HEALTH", Icon: Kit },
  { name: "EDUCATION", Icon: Books },
];

function Topics() {
  return (
    <section className="h-[345px] shrink-0 bg-white text-[#084a49]">
      <h2 className="pt-[22px] text-center font-['Inter',sans-serif] font-medium text-[30px] leading-[42px] tracking-[0.7px]">Topics</h2>
      <p className="mt-[7px] text-center font-['Lato',sans-serif] text-[18px] leading-[24px] tracking-[-0.12px]">Search by selecting a topic</p>
      <div className="mx-auto mt-[33px] w-[1170px] grid grid-cols-4">
        {topics.map(({ name, Icon }) => (
          <div key={name} className="flex flex-col items-center">
            <svg width="80" height="80" viewBox="0 0 80 80">
              <circle cx="40" cy="40" r="37.700" fill="none" stroke={TEAL} strokeWidth="3.800" />
              <Icon />
            </svg>
            <button className="mt-[10px] w-[60%] h-[39px] rounded-[3px] bg-[#084a49] text-white font-['Lato',sans-serif] text-[14px] leading-[20px]">{name}</button>
          </div>
        ))}
      </div>
    </section>
  );
}

const Checks = () => (
  <g fill="none" stroke="#fff">
    <path d="M19 33L22.500 37L31 28.500M19 52L22.500 56L31 47.500" strokeWidth="3.200" />
    <path d="M36.500 34.500H64M36.500 53.500H64" strokeWidth="3.600" strokeLinecap="round" />
  </g>
);
const Cycle = () => (
  <g fill="none" stroke="#fff" strokeWidth="4.800">
    <path d="M28.500 41A13.500 13.500 0 0 1 51 32.500M55.500 43A13.500 13.500 0 0 1 33 52" />
    <path d="M56.500 26V38.500H44ZM27.500 58V45.500H40Z" fill="#fff" stroke="none" />
  </g>
);
const Bars = () => (
  <g stroke="#fff" strokeWidth="3.200" strokeLinecap="round">
    <path d="M29.500 29.500V54.500M38 29.500V54.500M46 42V54.500M54 29.500V54.500" />
  </g>
);

const steps = [
  { name: "Find facts", Icon: Checks },
  { name: "Visualize", Icon: Cycle },
  { name: "Get context", Icon: Bars },
];

function HowItWorks() {
  return (
    <section className="h-[219px] shrink-0 bg-[#f3f3f3] text-[#084a49] overflow-hidden font-['Inter',sans-serif] [font-feature-settings:'cv11']">
      <h2 className="pt-[22px] text-center font-medium text-[30px] leading-[42px] tracking-[0.5px]">How it Works</h2>
      <div className="mx-auto mt-[30px] w-[1170px] flex">
        {steps.map(({ name, Icon }) => (
          <div key={name} className="w-[33%] flex flex-col items-center">
            <svg width="84" height="84" viewBox="0 0 84 84">
              <circle cx="42" cy="42" r="42" fill="#0a4f4c" />
              <Icon />
            </svg>
            <h4 className="mt-[13px] text-[21px] leading-[28px] font-medium tracking-[0.9px]">{name}</h4>
          </div>
        ))}
      </div>
    </section>
  );
}

function ScrollBar() {
  return (
    <div className="w-[16px] flex flex-col items-center justify-between bg-[#f1f1f1]">
      <div className="flex flex-col items-center">
        <span className="mt-[6px] border-x-[4px] border-x-transparent border-b-[4px] border-b-[#505050]" />
        <div className="mt-[100px] w-[12px] h-[348px] bg-[#c1c1c1]" />
      </div>
      <span className="mb-[7px] border-x-[4px] border-x-transparent border-t-[4px] border-t-[#505050]" />
    </div>
  );
}

export default function App() {
  return (
    <div className="w-[1920px] h-[1080px] flex flex-col overflow-hidden bg-[#2b2b2b]">
      <TopBar />
      <div className="flex flex-1 min-h-0">
        <aside className="w-[65px] shrink-0 flex flex-col justify-between bg-[#611054] pt-[6px] pb-[6px] border-r border-[#3d0a35]">
          <div className="flex flex-col gap-[7px]">
            {launcher.map(({ id, ...t }) => <Tile key={id} {...t} />)}
          </div>
          <Tile Art={Trash} bg="bg-[#6f2b65]" />
        </aside>
        <div className="flex-1 min-w-0 flex flex-col bg-[#cccccc] rounded-tl-[4px] border-l border-l-[#777] border-r-2 border-r-[#30303a] border-b-2 border-b-[#30303a] pl-[4px] pr-[3px] pb-[2px]">
          <BrowserChrome />
          <div className="flex flex-1 min-h-0">
            <main className="w-[1829px] flex flex-col overflow-hidden">
              <SiteHeader />
              <MapView />
              <Topics />
              <HowItWorks />
            </main>
            <ScrollBar />
          </div>
        </div>
      </div>
    </div>
  );
}
